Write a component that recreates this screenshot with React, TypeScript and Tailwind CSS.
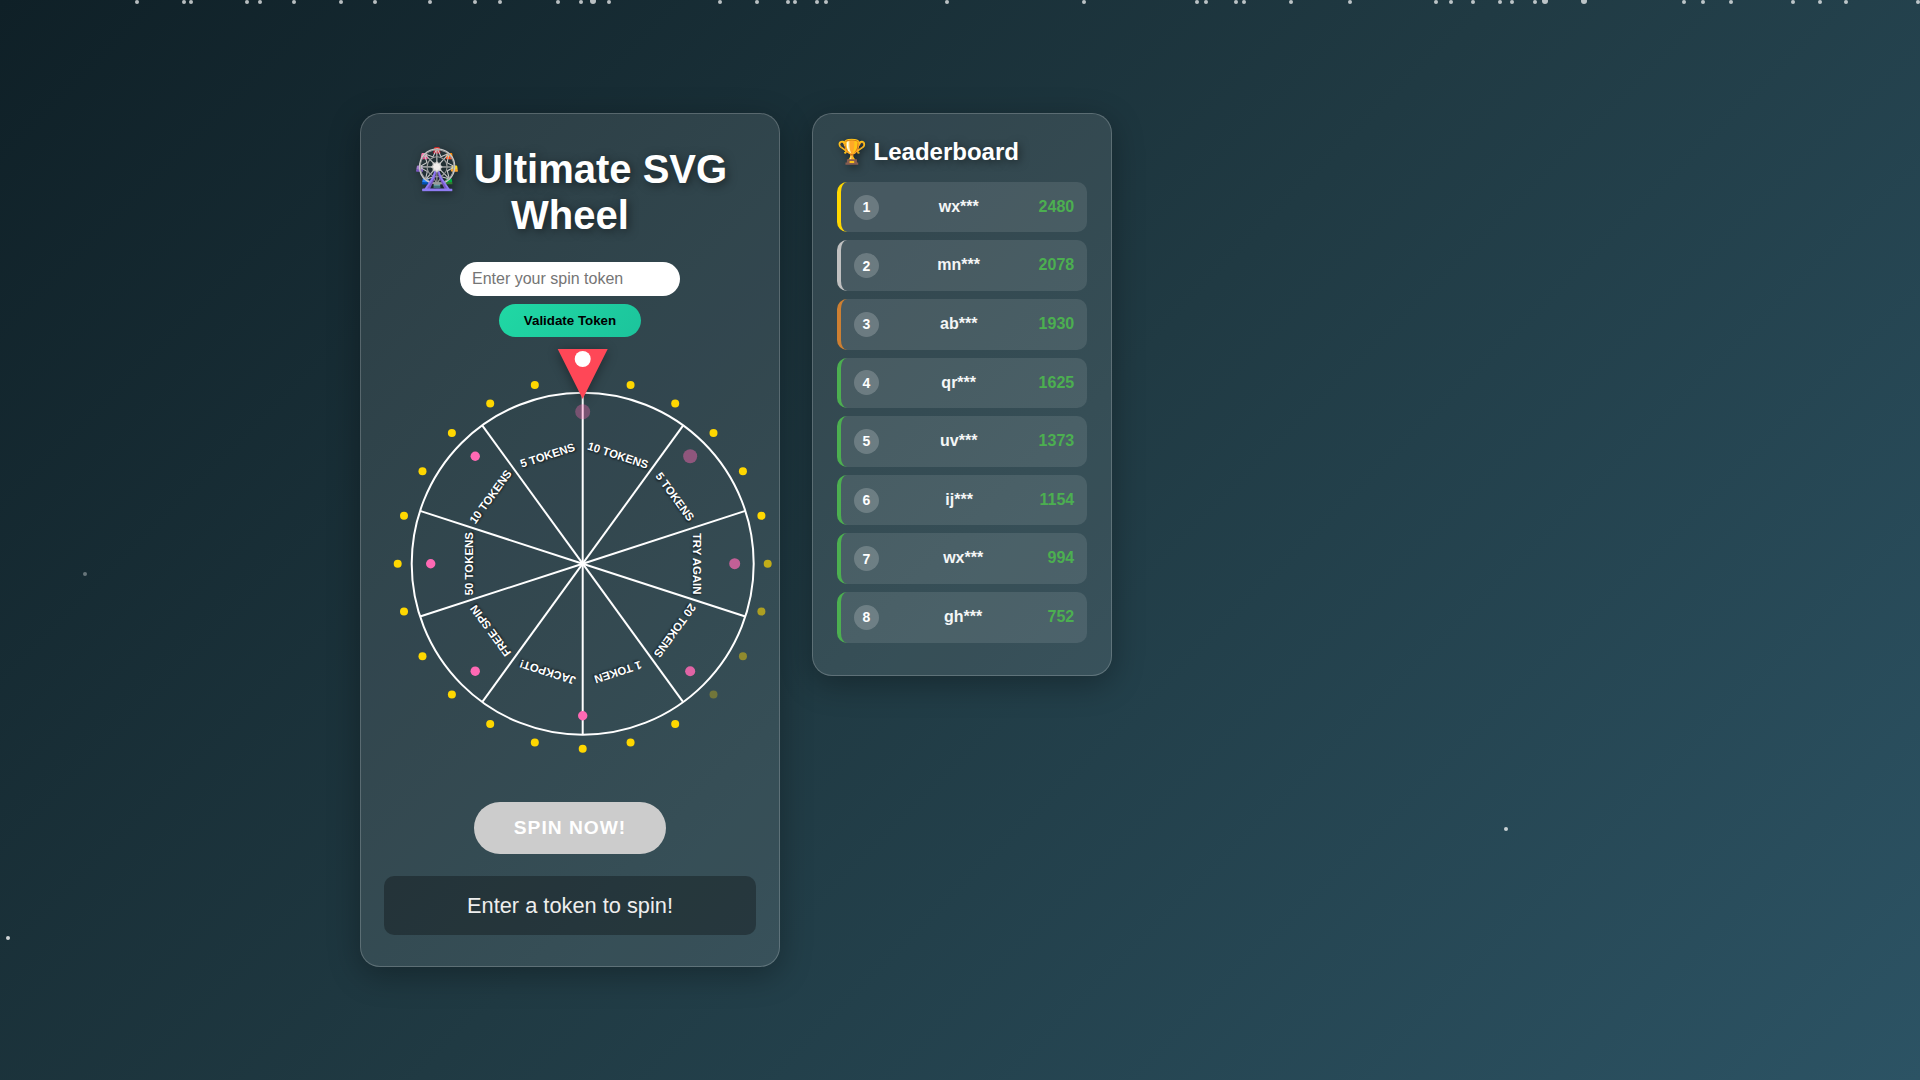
const SANS = "font-['Liberation_Sans','Noto_Color_Emoji',sans-serif]";

const CX = 198.7;
const CY = 218.7;

const SEGMENTS = ["10 TOKENS", "5 TOKENS", "TRY AGAIN", "20 TOKENS", "1 TOKEN", "JACKPOT!", "FREE SPIN", "50 TOKENS", "10 TOKENS", "5 TOKENS"];

// dots round the rim, dimmed ones are caught mid twinkle
const LIGHT_FADE: Record<number, number> = { 6: 0.7, 7: 0.6, 8: 0.45, 9: 0.3 };
const PEGS = [
  { r: 7.5, o: 0.35 },
  { r: 7, o: 0.45 },
  { r: 5.5, o: 0.7 },
  { r: 5, o: 0.85 },
  { r: 4.7, o: 1 },
  { r: 4.7, o: 1 },
  { r: 4.7, o: 1 },
  { r: 4.7, o: 1 },
];

const PLAYERS = [
  { rank: 1, name: "wx***", score: 2480, edge: "border-[#ffd700]" },
  { rank: 2, name: "mn***", score: 2078, edge: "border-[#c0c0c0]" },
  { rank: 3, name: "ab***", score: 1930, edge: "border-[#cd7f32]" },
  { rank: 4, name: "qr***", score: 1625, edge: "border-[#4caf50]" },
  { rank: 5, name: "uv***", score: 1373, edge: "border-[#4caf50]" },
  { rank: 6, name: "ij***", score: 1154, edge: "border-[#4caf50]" },
  { rank: 7, name: "wx***", score: 994, edge: "border-[#4caf50]" },
  { rank: 8, name: "gh***", score: 752, edge: "border-[#4caf50]" },
];

const TOP_STARS = [137, 184, 191, 247, 260, 294, 341, 375, 430, 475, 500, 558, 581, 593, 609, 720, 757, 788, 795, 817, 826, 947, 1084, 1197, 1206, 1236, 1244, 1291, 1350, 1436, 1451, 1473, 1500, 1512, 1535, 1545, 1584, 1684, 1703, 1731, 1793, 1820, 1846, 1918];
const BIG_STARS = [593, 1545, 1584];
const LOOSE_STARS = [
  { x: 85, y: 574, o: 0.35 },
  { x: 8, y: 938, o: 0.8 },
  { x: 1506, y: 829, o: 0.75 },
];

function polar(radius: number, deg: number) {
  const a = (deg * Math.PI) / 180;
  return { x: CX + radius * Math.sin(a), y: CY - radius * Math.cos(a) };
}

function Wheel() {
  return (
    <svg width="400" height="400" className="mt-2 mb-[57px] max-w-none self-start overflow-visible">
      <circle cx={CX} cy={CY} r={171} fill="none" stroke="#fff" strokeWidth="2" />
      {SEGMENTS.map((label, i) => {
        const end = polar(171, i * 36);
        return (
          <g key={i}>
            <line x1={CX} y1={CY} x2={end.x} y2={end.y} stroke="#fff" strokeWidth="2" />
            <text
              x={CX}
              y={CY - 110}
              transform={`rotate(${18 + i * 36} ${CX} ${CY})`}
              fill="#fff"
              fontSize="11.4"
              fontWeight="700"
              textAnchor="middle"
              className="[text-shadow:1px_1px_2px_rgba(0,0,0,0.7)]"
            >
              {label}
            </text>
          </g>
        );
      })}
      {PEGS.map((peg, i) => {
        const p = polar(152, i * 45);
        return <circle key={i} cx={p.x} cy={p.y} r={peg.r} fill="#ff69b4" opacity={peg.o} />;
      })}
      {Array.from({ length: 24 }, (_, i) => {
        const p = polar(185, i * 15);
        return <circle key={i} cx={p.x} cy={p.y} r="4" fill="#ffd700" opacity={LIGHT_FADE[i] ?? 1} />;
      })}
      <g className="drop-shadow-[0_2px_6px_rgba(0,0,0,0.4)]">
        <polygon points={`${CX - 25},4 ${CX + 25},4 ${CX},54`} fill="#ff4757" />
        <circle cx={CX} cy={14} r="8" fill="#fff" />
      </g>
    </svg>
  );
}

function Leaderboard() {
  return (
    <aside className="w-[300px] rounded-[20px] border border-white/20 bg-white/10 p-6 shadow-[0_8px_32px_rgba(0,0,0,0.3)]">
      <h2 className="mb-[16.2px] text-[24px] leading-[1.15] font-bold text-white [text-shadow:2px_2px_8px_rgba(0,0,0,0.5)]">🏆 Leaderboard</h2>
      {PLAYERS.map((p) => (
        <div key={p.rank} className={`mb-2 flex items-center justify-between rounded-[10px] border-l-4 bg-white/10 p-[12.8px] ${p.edge}`}>
          <span className="flex size-[25px] items-center justify-center rounded-full bg-white/20 text-sm font-bold text-white">{p.rank}</span>
          <span className="font-bold text-[#f4f6f6]">{p.name}</span>
          <span className="font-bold text-[#4caf50]">{p.score}</span>
        </div>
      ))}
    </aside>
  );
}

export default function App() {
  return (
    <div className={`relative flex min-h-screen items-start gap-8 overflow-hidden bg-[linear-gradient(135deg,#0f2027,#203a43,#2c5364)] pt-[113px] pl-[360px] leading-[1.15] ${SANS}`}>
      {TOP_STARS.map((x) => {
        const big = BIG_STARS.includes(x);
        return <span key={x} className="absolute rounded-full bg-white/70" style={{ left: x - (big ? 3 : 2), top: big ? -2 : 0, width: big ? 6 : 4, height: big ? 6 : 4 }} />;
      })}
      {LOOSE_STARS.map((s) => (
        <span key={s.x} className="absolute size-1 rounded-full bg-white" style={{ left: s.x - 2, top: s.y - 2, opacity: s.o }} />
      ))}

      <main className="flex w-[420px] flex-col items-center rounded-[20px] border border-white/20 bg-white/10 px-[23px] pt-8 pb-[31px] shadow-[0_8px_32px_rgba(0,0,0,0.3)]">
        <h1 className="mb-6 text-center text-[40px] leading-[1.15] font-bold text-white [text-shadow:2px_2px_10px_rgba(0,0,0,0.5)]">🎡 Ultimate SVG Wheel</h1>
        <input
          placeholder="Enter your spin token"
          className="mb-2 w-[220px] rounded-[20px] bg-white px-3 py-2 text-base leading-[1.15] text-black outline-none placeholder:text-[#757575]"
        />
        <button className="rounded-[20px] bg-[linear-gradient(135deg,#20d8a4,#1cc49c)] px-[24.5px] py-[8.5px] text-[13.33px] font-bold text-black">Validate Token</button>
        <Wheel />
        <button className="mb-[22.5px] rounded-[30px] bg-[#cccccc] px-10 py-[15px] text-[19.2px] font-bold tracking-[1px] text-white">SPIN NOW!</button>
        <div className="w-full rounded-[10px] bg-black/30 py-[17px] text-center text-[21.8px] text-[#eeeeee]">Enter a token to spin!</div>
      </main>

      <Leaderboard />
    </div>
  );
}
